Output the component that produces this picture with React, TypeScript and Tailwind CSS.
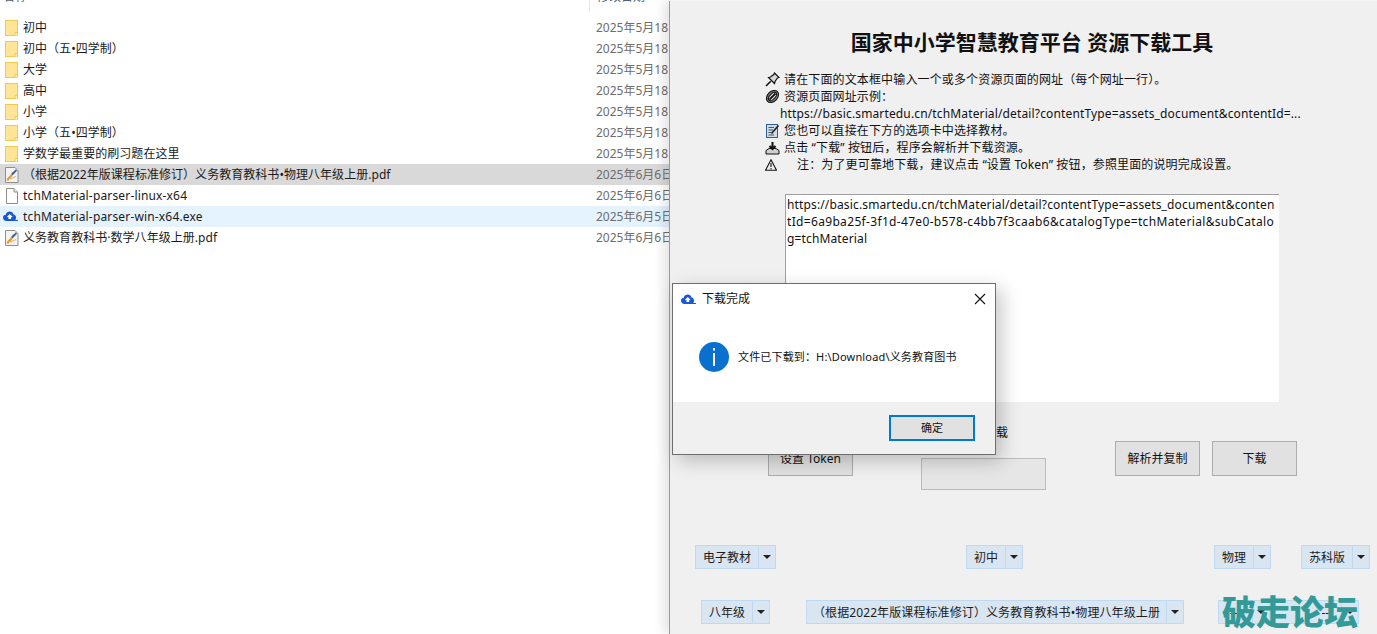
import type { ReactNode } from 'react';

const sans = 'font-["Noto_Sans","Noto_Sans_CJK_SC",sans-serif]';

const files = [
  { name: '初中', date: '2025年5月18', icon: 'folder' },
  { name: '初中（五•四学制）', date: '2025年5月18', icon: 'folder' },
  { name: '大学', date: '2025年5月18', icon: 'folder' },
  { name: '高中', date: '2025年5月18', icon: 'folder' },
  { name: '小学', date: '2025年5月18', icon: 'folder' },
  { name: '小学（五•四学制）', date: '2025年5月18', icon: 'folder' },
  { name: '学数学最重要的刷习题在这里', date: '2025年5月18', icon: 'folder' },
  { name: '（根据2022年版课程标准修订）义务教育教科书•物理八年级上册.pdf', date: '2025年6月6日', icon: 'pdf', row: 'bg-[#d9d9d9]' },
  { name: 'tchMaterial-parser-linux-x64', date: '2025年6月6日', icon: 'blank', wide: true },
  { name: 'tchMaterial-parser-win-x64.exe', date: '2025年6月5日', icon: 'cloud', row: 'bg-[#e5f3ff]', wide: true },
  { name: '义务教育教科书·数学八年级上册.pdf', date: '2025年6月6日', icon: 'pdf' },
];

function FolderIcon() {
  return (
    <svg width="14" height="16" viewBox="0 0 14 16">
      <rect x="0.5" y="0.5" width="12" height="15" fill="#ffe595" stroke="#f0c94f" />
      <path d="M10 15.5V12.5H12.5V15.5" fill="#fff3c4" stroke="#f0c94f" />
    </svg>
  );
}

function PdfIcon() {
  return (
    <svg width="14" height="16" viewBox="0 0 14 16">
      <path d="M0.5 0.5H10L13 3.500V15.500H0.500Z" fill="#f4f4f4" stroke="#8f8f8f" />
      <path d="M2.500 13.500C3 10.500 5 11 6 9C7 7 8 6 9 5" stroke="#e8972e" strokeWidth="2.200" fill="none" />
      <path d="M7 7.500L11.500 3" stroke="#3466b0" strokeWidth="1.800" fill="none" />
      <path d="M5 12L11 9.500" stroke="#f1b45c" strokeWidth="1.200" fill="none" />
    </svg>
  );
}

function BlankIcon() {
  return (
    <svg width="14" height="16" viewBox="0 0 14 16">
      <path d="M1.500 0.500H9L12.500 4V15.500H1.500Z" fill="#fff" stroke="#8c8c8c" />
      <path d="M9 0.500V4H12.500" fill="#eee" stroke="#8c8c8c" />
    </svg>
  );
}

// blue cloud with the small tail on its lower right, white arrow inside
function CloudIcon() {
  return (
    <svg width="15" height="11" viewBox="0 0 15 11">
      <path d="M3.500 10C1.500 10 0 8.800 0 6.800S1.300 3.800 2.800 3.700C3.300 1.500 5 0.500 6.800 0.500S10 1.700 10.500 3.500C12 3.600 13 4.800 13 6.500S12.500 9 12 9H15V10Z" fill="#1858d6" />
      <path d="M6.800 3L9.800 6H8.200V8H5.400V6H3.800Z" fill="#fff" />
    </svg>
  );
}

function FileIcon({ kind }: { kind: string }) {
  if (kind === 'folder') return <FolderIcon />;
  if (kind === 'pdf') return <PdfIcon />;
  if (kind === 'blank') return <BlankIcon />;
  return <CloudIcon />;
}

function PinIcon() {
  return (
    <svg width="15" height="15" viewBox="0 0 15 15" fill="none" stroke="#111" strokeWidth="1.200">
      <path d="M9.500 1L14 5.500L12.500 6L10 9.500L9.500 11.500L3.500 5.500L5.500 5L8.800 2.500Z" fill="#d9d9d9" />
      <path d="M5.800 9.200L1 14" strokeWidth="1.600" />
    </svg>
  );
}

function LinkIcon() {
  return (
    <svg width="15" height="15" viewBox="0 0 15 15" fill="none">
      <ellipse cx="7.500" cy="7.500" rx="7" ry="5" transform="rotate(-45 7.500 7.500)" fill="#777" stroke="#111" />
      <ellipse cx="7.500" cy="7.500" rx="5" ry="2.600" transform="rotate(-45 7.500 7.500)" fill="#efefef" stroke="#111" />
      <path d="M4.500 10.500L10.500 4.500" stroke="#111" strokeWidth="1.800" />
    </svg>
  );
}

function NoteIcon() {
  return (
    <svg width="15" height="15" viewBox="0 0 15 15" fill="none">
      <rect x="1.500" y="1.500" width="11" height="13" fill="#cfdbe6" stroke="#2f5f8f" />
      <path d="M3.500 4.500H9M3.500 7H8M3.500 9.500H6.500M3.500 12H9" stroke="#555" />
      <path d="M6.500 10.500L13.500 2.500" stroke="#222" strokeWidth="1.600" />
    </svg>
  );
}

function InboxIcon() {
  return (
    <svg width="15" height="14" viewBox="0 0 15 14" fill="none" stroke="#111">
      <path d="M1 9.500L4 7.500H11L14 9.500V13H1Z" fill="#cfcfcf" />
      <path d="M7.500 1V7M4.500 5L7.500 8L10.500 5" strokeWidth="2" />
    </svg>
  );
}

function WarnIcon() {
  return (
    <svg width="12" height="12" viewBox="0 0 12 12" fill="none" stroke="#111" strokeWidth="1.100">
      <path d="M6 0.800L11.500 11.300H0.500Z" />
      <path d="M6 4V8M6 9V10.300" />
    </svg>
  );
}

function NoticeLine({ icon, children }: { icon?: ReactNode; children: ReactNode }) {
  return (
    <div className="flex h-[17px] items-center">
      <span className="flex w-[19px] shrink-0 items-center">{icon}</span>
      <span className="whitespace-pre">{children}</span>
    </div>
  );
}

function Combo({ label, width, textWidth, className = '', textClass = 'justify-center' }: { label: string; width: string; textWidth: string; className?: string; textClass?: string }) {
  return (
    <div className={`flex h-[24px] shrink-0 border border-[#bfdaf0] bg-[#d9e6f2] text-[12px] text-[#1c1c1c] ${width} ${className}`}>
      <div className={`flex items-center whitespace-pre border-r border-[#bfdaf0] pt-[1px] ${textClass} ${textWidth}`}>{label}</div>
      <div className="flex flex-1 items-center justify-center">
        <div className="h-0 w-0 border-x-[4px] border-t-[4px] border-x-transparent border-t-[#222]" />
      </div>
    </div>
  );
}

function ActionButton({ children, className = '' }: { children: ReactNode; className?: string }) {
  return (
    <div className={`flex h-[35px] w-[85px] items-center justify-center border border-[#adadad] bg-[#e1e1e1] text-[12px] text-[#111] ${className}`}>
      {children}
    </div>
  );
}

export default function App() {
  return (
    <div className={`relative flex h-[634px] w-[1377px] overflow-hidden bg-white ${sans}`}>
      {/* explorer */}
      <div className="w-[669px] shrink-0 overflow-hidden">
        <div className="relative h-[17px] text-[12px] text-[#4c607a]">
          <span className="absolute left-[3px] top-[-12px]">名称</span>
          <span className="absolute left-[597px] top-[-12px]">修改日期</span>
          <div className="absolute left-[589px] top-0 h-[11px] w-px bg-[#e5e5e5]" />
        </div>
        {files.map((file) => (
          <div key={file.name} className={`flex h-[21px] items-center text-[12px] ${file.row ?? ''}`}>
            <div className={`flex w-[23px] shrink-0 items-center ${file.icon === 'cloud' ? 'pl-[3px]' : 'pl-[5px]'}`}>
              <FileIcon kind={file.icon} />
            </div>
            <div className={`w-[573px] shrink-0 whitespace-nowrap text-[#1a1a1a] ${file.wide ? 'tracking-[0.16px]' : 'tracking-[0.04px]'}`}>{file.name}</div>
            <div className="whitespace-nowrap text-[#6d6d6d]">{file.date}</div>
          </div>
        ))}
      </div>

      {/* downloader window */}
      <div className="mt-px h-[633px] flex-1 border-l border-[#9a9a9a] bg-[#f0f0f0] shadow-[-6px_0_10px_rgba(0,0,0,0.1)]">
        <h1 className="mt-[26px] h-[30px] w-[724px] text-center text-[21px] leading-[30px] font-bold text-[#111]">
          国家中小学智慧教育平台 资源下载工具
        </h1>
        <div className="ml-[95px] mt-[14px] text-[12px] tracking-[0.14px] text-[#111]">
          <NoticeLine icon={<PinIcon />}>请在下面的文本框中输入一个或多个资源页面的网址（每个网址一行）。</NoticeLine>
          <NoticeLine icon={<LinkIcon />}>资源页面网址示例：</NoticeLine>
          <NoticeLine>
            <span className="-ml-[4px]">https://basic.smartedu.cn/tchMaterial/detail?contentType=assets_document&amp;contentId=...</span>
          </NoticeLine>
          <NoticeLine icon={<NoteIcon />}>您也可以直接在下方的选项卡中选择教材。</NoticeLine>
          <NoticeLine icon={<InboxIcon />}>点击 “下载” 按钮后，程序会解析并下载资源。</NoticeLine>
          <NoticeLine icon={<WarnIcon />}>    注：为了更可靠地下载，建议点击 “设置 Token” 按钮，参照里面的说明完成设置。</NoticeLine>
        </div>

        <div className="ml-[115px] mt-[21px] h-[208px] w-[494px] border-l border-t border-[#a0a0a0] bg-white pl-[1px] pt-[1px] text-[12px] leading-[17px] tracking-[0.14px] text-[#111]">
          https://basic.smartedu.cn/tchMaterial/detail?contentType=assets_document&amp;conten<br />
          <span className="tracking-[0.33px]">tId=6a9ba25f-3f1d-47e0-b578-c4bb7f3caab6&amp;catalogType=tchMaterial&amp;subCatalo</span><br />
          g=tchMaterial
        </div>

        <div className="mt-[23px] flex h-[65px]">
          <ActionButton className="ml-[98px] mt-[16px]">设置 Token</ActionButton>
          <div className="ml-[68px] w-[125px]">
            <div className="h-[33px] pr-[38px] text-right text-[12px] leading-[16px] text-[#111]">下载</div>
            <div className="h-[32px] border border-[#bcbcbc] bg-[#e6e6e6]" />
          </div>
          <ActionButton className="ml-[69px] mt-[16px]">解析并复制</ActionButton>
          <ActionButton className="ml-[12px] mt-[16px]">下载</ActionButton>
        </div>

        <div className="mt-[55px] flex">
          <Combo label="电子教材" width="w-[81px]" textWidth="w-[63px]" className="ml-[25px]" />
          <Combo label="初中" width="w-[57px]" textWidth="w-[39px]" className="ml-[190px]" />
          <Combo label="物理" width="w-[57px]" textWidth="w-[39px]" className="ml-[191px]" />
          <Combo label="苏科版" width="w-[69px]" textWidth="w-[51px]" className="ml-[30px]" />
        </div>
        <div className="mt-[31px] flex">
          <Combo label="八年级" width="w-[69px]" textWidth="w-[51px]" className="ml-[31px]" />
          <Combo label="（根据2022年版课程标准修订）义务教育教科书•物理八年级上册" width="w-[378px]" textWidth="w-[360px]" className="ml-[36px] tracking-[0.1px]" />
          <Combo label="---" width="w-[52px]" textWidth="w-[34px]" className="ml-[34px]" />
          <Combo label="---" width="w-[89px]" textWidth="w-[71px]" textClass="justify-end pr-[8px]" />
        </div>
      </div>

      {/* message dialog */}
      <div className="absolute left-[672px] top-[283px] flex h-[172px] w-[324px] flex-col border border-[#6e6e6e] bg-white shadow-[6px_6px_18px_rgba(0,0,0,0.22)]">
        <div className="flex h-[30px] shrink-0 items-center pl-[8px] pr-[9px]">
          <CloudIcon />
          <span className="ml-[6px] flex-1 text-[12px] text-[#111]">下载完成</span>
          <svg width="12" height="12" viewBox="0 0 12 12" stroke="#111" strokeWidth="1.100">
            <path d="M1 1L11 11M11 1L1 11" />
          </svg>
        </div>
        <div className="flex flex-1 items-center pl-[26px] pb-[2px]">
          <svg width="30" height="30" viewBox="0 0 30 30">
            <circle cx="15" cy="15" r="15" fill="#0a70cf" />
            <rect x="14" y="6" width="2" height="2.500" fill="#fff" />
            <rect x="14" y="11" width="2" height="13" fill="#fff" />
          </svg>
          <span className="ml-[9px] pt-[1px] text-[11px] tracking-[0.16px] text-[#111]">文件已下载到：H:\Download\义务教育图书</span>
        </div>
        <div className="flex h-[52px] shrink-0 items-center justify-end bg-[#f0f0f0] pr-[20px]">
          <div className="flex h-[26px] w-[86px] items-center justify-center border-2 border-[#0078d7] bg-[#e1e1e1] text-[11px] text-[#111]">确定</div>
        </div>
      </div>

      {/* forum watermark */}
      <div className="absolute left-[1222px] top-[590px] text-[34px] leading-[44px] font-black text-[#339a98]">破走论坛</div>
    </div>
  );
}
